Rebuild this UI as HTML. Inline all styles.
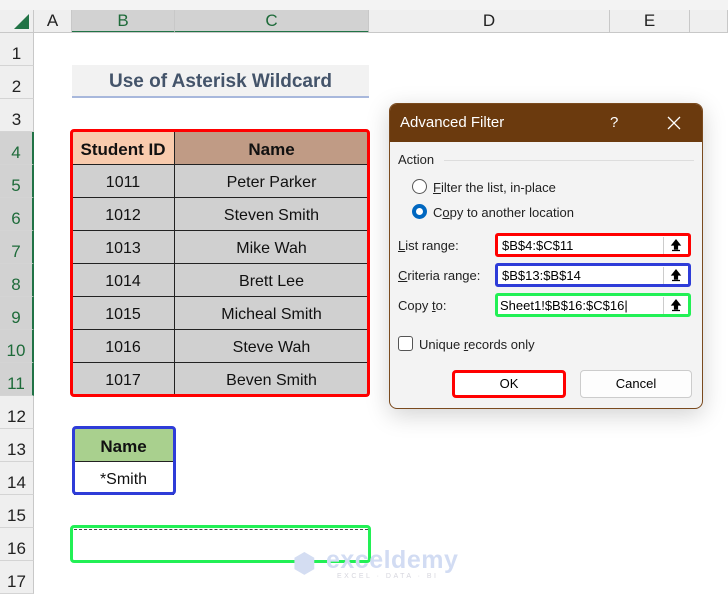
<!DOCTYPE html>
<html><head><style>
*{margin:0;padding:0;box-sizing:border-box}
body{width:728px;height:597px;background:#fff;position:relative;overflow:hidden;font-family:"Liberation Sans",sans-serif}
.a{position:absolute}
.rh{position:absolute;left:0;width:34px;height:33px;background:#efefef;border-bottom:1px solid #d4d4d4;border-right:1px solid #c8c8c8;font-size:17px;color:#222;text-align:center;line-height:33px;padding-top:4px}
.ch{position:absolute;top:10px;height:23px;background:#efefef;border-right:1px solid #c8c8c8;font-size:17px;color:#222;text-align:center;line-height:22px}
.c{position:absolute;font-size:16px;text-align:center;color:#111;border-right:1px solid #222;border-bottom:1px solid #222;padding-top:1px}
.dl{font-size:13px;color:#222;position:absolute}
.inp{position:absolute;left:495px;width:196px;height:24px;background:#fff;font-size:13px;line-height:19px;padding-left:4px;border-radius:3px}
.up{position:absolute;right:1px;top:1px;width:24px;height:17px;border-left:1px solid #ccc;background:#fff}
</style></head><body>
<div class="a" style="left:0;top:0;width:728px;height:10px;background:#f3f3f3"></div>
<div class="a" style="left:0;top:10px;width:34px;height:23px;background:#efefef;border-right:1px solid #c8c8c8;border-bottom:1px solid #c8c8c8"></div>
<div class="a" style="left:14px;top:14px;width:0;height:0;border-left:15px solid transparent;border-bottom:15px solid #217346"></div>
<div class="ch" style="left:34px;width:38px">A</div>
<div class="ch" style="left:72px;width:103px;background:#d2d2d2;color:#1e6b3a;border-bottom:2px solid #217346">B</div>
<div class="ch" style="left:175px;width:194px;background:#d2d2d2;color:#1e6b3a;border-bottom:2px solid #217346">C</div>
<div class="ch" style="left:369px;width:241px">D</div>
<div class="ch" style="left:610px;width:80px">E</div>
<div class="ch" style="left:690px;width:38px"></div>
<div class="a" style="left:0;top:32px;width:728px;height:1px;background:#c8c8c8"></div>

<div class="rh" style="top:33px">1</div><div class="rh" style="top:66px">2</div><div class="rh" style="top:99px">3</div>
<div class="rh" style="top:132px;background:#d2d2d2;color:#1e6b3a;border-right:2px solid #217346">4</div>
<div class="rh" style="top:165px;background:#d2d2d2;color:#1e6b3a;border-right:2px solid #217346">5</div>
<div class="rh" style="top:198px;background:#d2d2d2;color:#1e6b3a;border-right:2px solid #217346">6</div>
<div class="rh" style="top:231px;background:#d2d2d2;color:#1e6b3a;border-right:2px solid #217346">7</div>
<div class="rh" style="top:264px;background:#d2d2d2;color:#1e6b3a;border-right:2px solid #217346">8</div>
<div class="rh" style="top:297px;background:#d2d2d2;color:#1e6b3a;border-right:2px solid #217346">9</div>
<div class="rh" style="top:330px;background:#d2d2d2;color:#1e6b3a;border-right:2px solid #217346">10</div>
<div class="rh" style="top:363px;background:#d2d2d2;color:#1e6b3a;border-right:2px solid #217346">11</div>
<div class="rh" style="top:396px">12</div><div class="rh" style="top:429px">13</div><div class="rh" style="top:462px">14</div>
<div class="rh" style="top:495px">15</div><div class="rh" style="top:528px">16</div><div class="rh" style="top:561px">17</div>

<div class="a" style="left:72px;top:65px;width:297px;height:33px;background:#f2f2f2;border-bottom:2px solid #a8b8dc;font-size:19px;font-weight:bold;color:#44546a;text-align:center;line-height:33px">Use of Asterisk Wildcard</div>

<div class="c" style="left:72px;top:132px;width:103px;height:33px;line-height:33px;background:#f8cbad;font-weight:bold;font-size:17px">Student ID</div>
<div class="c" style="left:175px;top:132px;width:194px;height:33px;line-height:33px;background:#c09b85;font-weight:bold;font-size:17px">Name</div>
<div class="c" style="left:72px;top:165px;width:103px;height:33px;line-height:33px;background:#d0d0d0">1011</div><div class="c" style="left:175px;top:165px;width:194px;height:33px;line-height:33px;background:#d0d0d0">Peter Parker</div>
<div class="c" style="left:72px;top:198px;width:103px;height:33px;line-height:33px;background:#d0d0d0">1012</div><div class="c" style="left:175px;top:198px;width:194px;height:33px;line-height:33px;background:#d0d0d0">Steven Smith</div>
<div class="c" style="left:72px;top:231px;width:103px;height:33px;line-height:33px;background:#d0d0d0">1013</div><div class="c" style="left:175px;top:231px;width:194px;height:33px;line-height:33px;background:#d0d0d0">Mike Wah</div>
<div class="c" style="left:72px;top:264px;width:103px;height:33px;line-height:33px;background:#d0d0d0">1014</div><div class="c" style="left:175px;top:264px;width:194px;height:33px;line-height:33px;background:#d0d0d0">Brett Lee</div>
<div class="c" style="left:72px;top:297px;width:103px;height:33px;line-height:33px;background:#d0d0d0">1015</div><div class="c" style="left:175px;top:297px;width:194px;height:33px;line-height:33px;background:#d0d0d0">Micheal Smith</div>
<div class="c" style="left:72px;top:330px;width:103px;height:33px;line-height:33px;background:#d0d0d0">1016</div><div class="c" style="left:175px;top:330px;width:194px;height:33px;line-height:33px;background:#d0d0d0">Steve Wah</div>
<div class="c" style="left:72px;top:363px;width:103px;height:33px;line-height:33px;background:#d0d0d0">1017</div><div class="c" style="left:175px;top:363px;width:194px;height:33px;line-height:33px;background:#d0d0d0">Beven Smith</div>
<div class="a" style="left:70px;top:129px;width:300px;height:268px;border:3px solid #f00;border-radius:4px"></div>

<div class="c" style="left:74px;top:429px;width:100px;height:33px;line-height:33px;background:#a9d08e;font-weight:bold;font-size:17px">Name</div>
<div class="c" style="left:74px;top:462px;width:100px;height:33px;line-height:33px;background:#fff">*Smith</div>
<div class="a" style="left:72px;top:426px;width:104px;height:69px;border:3px solid #2e3cd8;border-radius:4px"></div>

<div class="a" style="left:74px;top:529px;width:294px;height:1px;border-top:1px dashed #444"></div>
<div class="a" style="left:70px;top:525px;width:301px;height:38px;border:3px solid #22f055;border-radius:4px"></div>
<div class="a" style="left:293px;top:548px;font-size:26px;font-weight:bold;color:#d4ddf2">&#11042;</div>
<div class="a" style="left:326px;top:546px;font-size:25px;font-weight:bold;color:#d2dcf3;letter-spacing:0.5px">exceldemy</div>
<div class="a" style="left:337px;top:573px;font-size:7px;letter-spacing:2.5px;color:#d6d6de">EXCEL · DATA · BI</div>

<!-- dialog -->
<div class="a" style="left:389px;top:103px;width:314px;height:306px;background:#f3f3f3;border:1px solid #7a4a1e;border-radius:8px;box-shadow:0 6px 24px rgba(0,0,0,.18);overflow:hidden">
<div style="height:38px;background:#6b3a0e;color:#fff;font-size:15px;line-height:38px;padding-left:10px;position:relative">Advanced Filter<span style="position:absolute;left:220px">?</span>
<svg style="position:absolute;left:277px;top:12px" width="14" height="14"><path d="M1 1L13 13M13 1L1 13" stroke="#fff" stroke-width="1.3"/></svg></div>
</div>
<div class="dl" style="left:398px;top:152px">Action</div>
<div class="a" style="left:444px;top:160px;width:250px;height:1px;background:#ddd"></div>
<div class="a" style="left:412px;top:179px;width:15px;height:15px;border:1px solid #555;border-radius:50%;background:#fff"></div>
<div class="dl" style="left:433px;top:180px"><u>F</u>ilter the list, in-place</div>
<div class="a" style="left:412px;top:204px;width:15px;height:15px;border:4px solid #0067c0;border-radius:50%;background:#fff"></div>
<div class="dl" style="left:433px;top:205px">C<u>o</u>py to another location</div>
<div class="dl" style="left:398px;top:238px"><u>L</u>ist range:</div>
<div class="dl" style="left:398px;top:268px"><u>C</u>riteria range:</div>
<div class="dl" style="left:398px;top:298px">Copy <u>t</u>o:</div>
<div class="inp" style="top:233px;border:3px solid #f00">$B$4:$C$11<div class="up"><svg width="24" height="17"><path d="M12 3L8 8H10.5V12H13.5V8H16Z M8 13.5H16" fill="#000" stroke="#000" stroke-width="1.2"/></svg></div></div>
<div class="inp" style="top:263px;border:3px solid #2e3cd8">$B$13:$B$14<div class="up"><svg width="24" height="17"><path d="M12 3L8 8H10.5V12H13.5V8H16Z M8 13.5H16" fill="#000" stroke="#000" stroke-width="1.2"/></svg></div></div>
<div class="inp" style="top:293px;border:3px solid #22f055;padding-left:2px">Sheet1!$B$16:$C$16|<div class="up"><svg width="24" height="17"><path d="M12 3L8 8H10.5V12H13.5V8H16Z M8 13.5H16" fill="#000" stroke="#000" stroke-width="1.2"/></svg></div></div>
<div class="a" style="left:398px;top:336px;width:15px;height:15px;border:1px solid #555;border-radius:3px;background:#fff"></div>
<div class="dl" style="left:419px;top:337px">Unique <u>r</u>ecords only</div>
<div class="a" style="left:452px;top:370px;width:114px;height:28px;border:3px solid #f00;border-radius:4px;background:#fff;font-size:13px;text-align:center;line-height:22px">OK</div>
<div class="a" style="left:580px;top:370px;width:112px;height:28px;border:1px solid #ccc;border-radius:4px;background:#fdfdfd;font-size:13px;text-align:center;line-height:26px">Cancel</div>
</body></html>
